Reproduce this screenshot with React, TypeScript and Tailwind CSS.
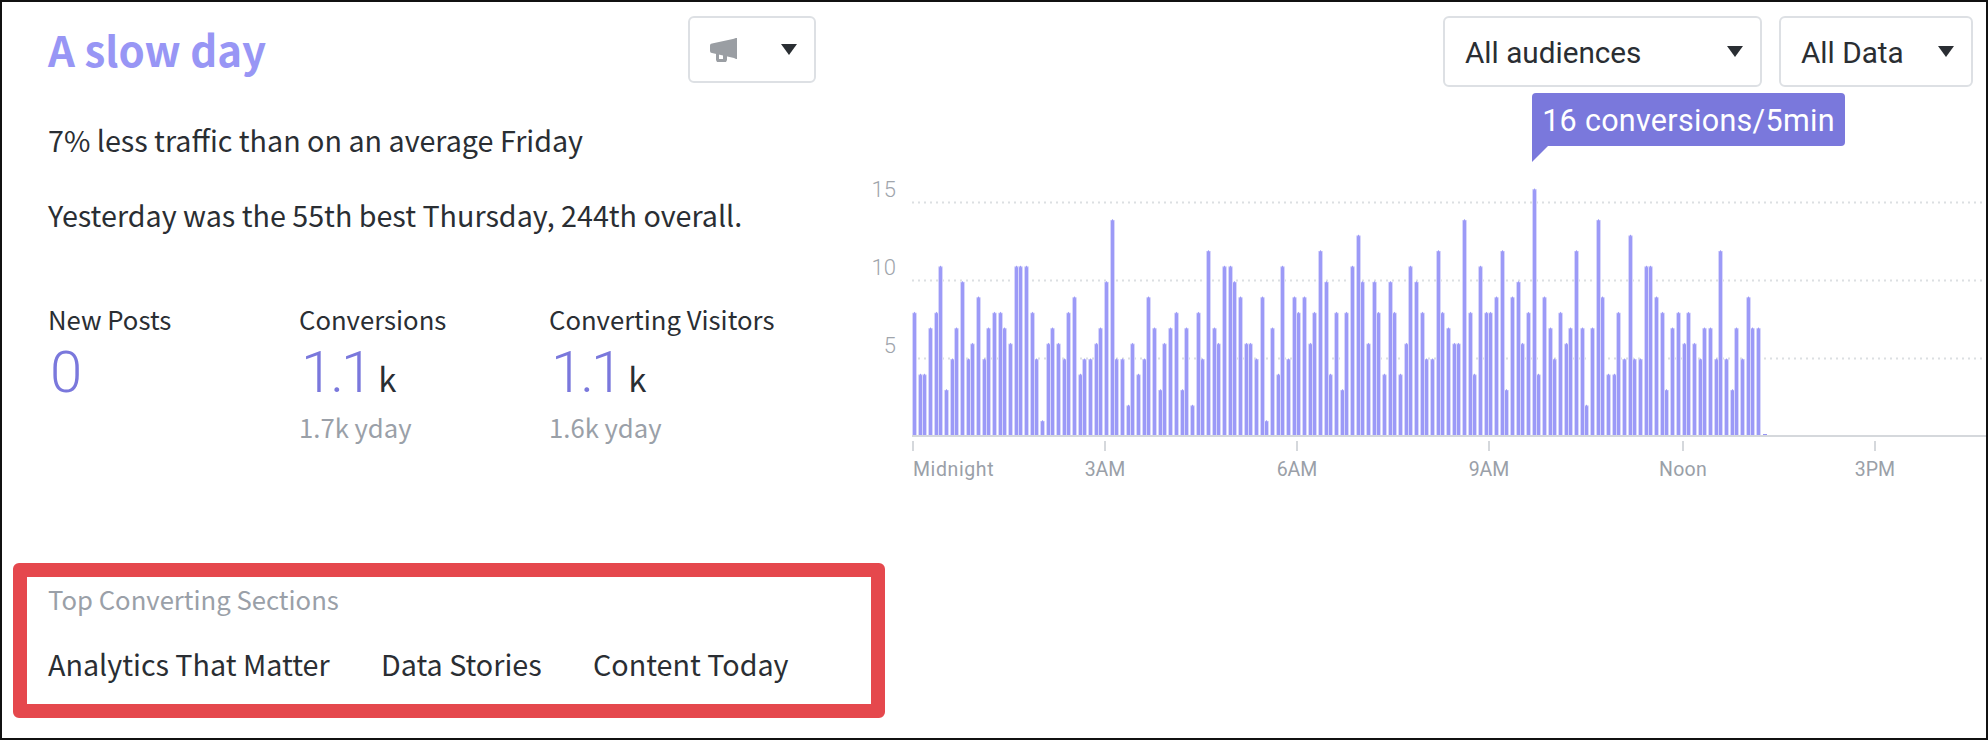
import React from "react";

const seg = (base: number, pairs: number[][]) => pairs.map(([z, v]) => ({ x: Math.floor(base + z / 3) + 0.5, v }));

const bars = [
  ...seg(850, [[194,8],[212,4],[224,4],[242,7],[260,8],[272,11],[290,3],[308,5],[320,7],[338,10],[356,5],[368,6],[386,9],[404,5],[416,7],[434,8],[452,8],[464,7],[482,6],[500,11],[512,11],[530,11],[548,8],[560,5],[578,1],[596,6],[608,7],[626,6],[644,5],[656,8],[674,9],[692,4],[704,5],[722,5],[740,6],[752,7],[770,10],[788,14],[800,5],[818,5],[836,2],[848,6],[866,4],[884,5],[896,9]]),
  ...seg(1150, [[14,7],[32,3],[44,6],[62,7],[80,8],[98,3],[110,7],[128,2],[146,8],[158,5],[176,12],[194,7],[206,6],[224,11],[242,11],[254,10],[272,9],[290,6],[302,6],[320,5],[338,9],[350,1],[368,7],[386,4],[398,11],[416,5],[434,9],[446,8],[464,9],[482,6],[494,8],[512,12],[530,10],[542,4],[560,8],[578,3],[590,8],[608,11],[626,13],[638,10],[656,6],[674,10],[686,8],[704,4],[722,10],[734,8],[752,4],[770,6],[782,11],[800,10],[818,8],[830,5],[848,5],[866,12],[878,8],[896,7]]),
  ...seg(1450, [[14,6],[26,6],[44,14],[62,8],[74,4],[92,11],[110,8],[122,8],[140,9],[158,12],[170,3],[188,9],[206,10],[218,6],[236,8],[254,16],[266,4],[284,9],[302,7],[314,5],[332,8],[350,6],[362,7],[380,12],[398,7],[410,2],[428,7],[446,14],[458,9],[476,4],[494,4],[506,8],[524,5],[542,13],[554,5],[572,5],[590,11],[602,11],[620,9],[638,8],[650,3],[668,7],[686,8],[704,6],[716,8],[734,6],[752,5],[764,7],[782,7],[800,5],[812,12],[830,5],[848,3],[860,7],[878,5],[896,9]]),
  ...seg(1700, [[158,7],[176,7]]),
];

const ticks: [number, string, "start" | "middle", number][] = [
  [913, "Midnight", "start", 0.6],
  [1105, "3AM", "middle", 0],
  [1297, "6AM", "middle", 0],
  [1489, "9AM", "middle", 0],
  [1683, "Noon", "middle", 0.3],
  [1875, "3PM", "middle", 0],
];

const Caret = () => (
  <svg width="16" height="11" viewBox="0 0 16 11" className="block">
    <path d="M0 0H16L8 11Z" fill="#2a2e33" />
  </svg>
);

const Chart = () => (
  <svg viewBox="860 170 1126 320" width="1126" height="320" className="block">
    {[202, 280, 358].map((y) => (
      <line key={y} x1="912" x2="1986" y1={y + 0.5} y2={y + 0.5} stroke="#dcdfe2" strokeWidth="2" strokeDasharray="2 4" />
    ))}
    {([["15", 197], ["10", 275], ["5", 353]] as [string, number][]).map(([t, y]) => (
      <text key={t} x="896" y={y} textAnchor="end" fontSize="22" fill="#a0a5ac" fontFamily="Roboto, sans-serif" fontWeight="300">{t}</text>
    ))}
    {bars.map((b, i) => {
      const top = 435.4 - 15.45 * b.v;
      return (
        <g key={i}>
          <rect x={b.x - 2.5} y={top + 1} width="5" height={435 - top - 1} fill="#d8d7fb" />
          <path d={`M${b.x - 1.5} 435V${top + 2}L${b.x} ${top}L${b.x + 1.5} ${top + 2}V435Z`} fill="#9c9af7" />
        </g>
      );
    })}
    <rect x="1763" y="434" width="4" height="2" fill="#9896f5" />
    <rect x="912" y="435" width="1074" height="2" fill="#d5d8dc" />
    {ticks.map(([x, t, a, ls]) => (
      <g key={t}>
        <rect x={x - 1} y="441" width="2" height="10" fill="#d5d8dc" />
        <text x={x} y="476" textAnchor={a} fontSize="19.5" letterSpacing={ls} fill="#9aa0a8" fontFamily="Roboto, sans-serif" fontWeight="400">{t}</text>
      </g>
    ))}
  </svg>
);

const Stat = ({ label, value, unit, sub, w }: { label: string; value: string; unit?: string; sub?: string; w: string }) => (
  <div className={`${w} flex flex-col`}>
    <div className="text-[25.7px] leading-[32px] text-[#2a2e33]">{label}</div>
    <div className="flex items-baseline h-[66px] mt-[4px]">
      <span className="text-[58px] leading-[66px] font-light pl-[2px] tracking-[-3px] text-[#7a78dc] font-['Roboto',sans-serif]">{value}</span>
      {unit && <span className="text-[33px] ml-[8px] text-[#2a2e33]">{unit}</span>}
    </div>
    {sub && <div className="text-[25.7px] leading-[32px] mt-[6px] text-[#9aa0a8]">{sub}</div>}
  </div>
);

const Select = ({ label, w }: { label: string; w: string }) => (
  <div className={`${w} h-[71px] border-2 border-[#dde0e4] rounded-[6px] flex items-center justify-between pl-[20px] pr-[17px]`}>
    <span className="text-[29.7px] leading-[40px] mt-[2px] text-[#2a2e33] font-['Roboto',sans-serif]">{label}</span>
    <Caret />
  </div>
);

export default function App() {
  return (
    <div className="w-[1988px] h-[740px] border-2 border-[#111] bg-white overflow-hidden flex flex-col font-['Noto_Sans_CJK_SC','Noto_Sans',sans-serif]">
      <div className="flex h-[559px]">
        <div className="w-[858px] pl-[46px] pt-[14px] flex flex-col">
          <div className="flex items-start justify-between w-[768px]">
            <h1 className="text-[42px] leading-[56px] mt-[5px] font-semibold text-[#9896f5]">A slow day</h1>
            <div className="w-[128px] h-[67px] border-2 border-[#dde0e4] rounded-[6px] flex items-center justify-between pl-[20px] pr-[17px]">
              <svg width="27" height="24" viewBox="0 0 27 24" className="block">
                <path d="M2 5.5L24 .8Q25 0 26 0H27V21H26L24 20L2 15Q0 15 0 13V7.5Q0 5.5 2 5.5Z" fill="#9a9ea3" />
                <path fillRule="evenodd" d="M6 14H17V22L16 24H7L6 22ZM9 16V21H13V16Z" fill="#9a9ea3" />
              </svg>
              <Caret />
            </div>
          </div>
          <p className="text-[28.7px] leading-[40px] mt-[37px] text-[#2a2e33]">7% less traffic than on an average Friday</p>
          <p className="text-[28.7px] leading-[40px] mt-[35px] text-[#2a2e33]">Yesterday was the 55th best Thursday, 244th overall.</p>
          <div className="flex mt-[68px]">
            <Stat w="w-[251px]" label="New Posts" value="0" />
            <Stat w="w-[250px]" label="Conversions" value="1.1" unit="k" sub="1.7k yday" />
            <Stat w="w-[250px]" label="Converting Visitors" value="1.1" unit="k" sub="1.6k yday" />
          </div>
        </div>
        <div className="flex-1 relative pt-[14px]">
          <div className="flex justify-end gap-[17px] pr-[13px]">
            <Select label="All audiences" w="w-[319px]" />
            <Select label="All Data" w="w-[194px]" />
          </div>
          <div className="mt-[83px]"><Chart /></div>
          <div className="absolute left-[672px] top-[91px] w-[313px] h-[53px] pt-[3px] bg-[#7a78dc] rounded-[4px] rounded-bl-none flex items-center justify-center text-white text-[30.5px] leading-[40px] tracking-[0.3px] font-['Roboto',sans-serif]">
            16 conversions/5min
            <svg width="16" height="16" viewBox="0 0 16 16" className="absolute left-0 top-[53px]"><path d="M0 0H16L0 16Z" fill="#7a78dc" /></svg>
          </div>
        </div>
      </div>
      <div className="ml-[11px] mt-[2px] w-[872px] h-[155px] border-[14px] border-[#e5484d] rounded-[6px] pl-[21px] flex flex-col">
        <div className="text-[25.7px] leading-[32px] mt-[6px] text-[#9aa0a8]">Top Converting Sections</div>
        <div className="flex mt-[29px] text-[28.7px] leading-[40px] text-[#2a2e33]">
          <span className="w-[333px]">Analytics That Matter</span>
          <span className="w-[212px]">Data Stories</span>
          <span>Content Today</span>
        </div>
      </div>
    </div>
  );
}
